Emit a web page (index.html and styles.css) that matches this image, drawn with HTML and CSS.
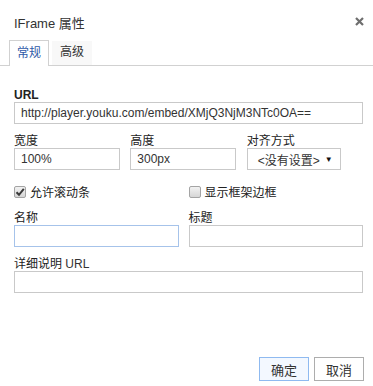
FILE: index.html
```html
<!DOCTYPE html>
<html lang="zh-CN">
    <head>
        <meta charset="utf-8">
        <title>IFrame 属性</title>
        <link rel="stylesheet" href="styles.css">
    </head>
    <body>
        <div class="dialog">
            <div class="dialog-title">
                <span>IFrame 属性</span>
                <svg class="close" width="9" height="9" viewBox="0 0 9 9"><path d="M1 1 L8 8 M8 1 L1 8" stroke="#6e6e6e" stroke-width="2.2"/></svg>
            </div>
            <div class="tabs">
                <div class="tab active">常规</div>
                <div class="tab">高级</div>
            </div>
            <div class="dialog-body">
                <div class="field">
                    <label class="bold">URL</label>
                    <div class="input wide">http://player.youku.com/embed/XMjQ3NjM3NTc0OA==</div>
                </div>
                <div class="row three">
                    <div class="field">
                        <label>宽度</label>
                        <div class="input small">100%</div>
                    </div>
                    <div class="field">
                        <label>高度</label>
                        <div class="input small">300px</div>
                    </div>
                    <div class="field">
                        <label>对齐方式</label>
                        <div class="select"><span>&lt;没有设置&gt;</span><span class="arrow">&#x25BC;</span></div>
                    </div>
                </div>
                <div class="row two checks">
                    <div class="check">
                        <span class="box"><svg width="10" height="10" viewBox="0 0 10 10"><path d="M1.5 5.2 L4 7.8 L8.8 1.8" fill="none" stroke="#3a3a3a" stroke-width="2"/></svg></span>
                        <span>允许滚动条</span>
                    </div>
                    <div class="check">
                        <span class="box"></span>
                        <span>显示框架边框</span>
                    </div>
                </div>
                <div class="row two">
                    <div class="field">
                        <label>名称</label>
                        <div class="input name focused"></div>
                    </div>
                    <div class="field">
                        <label>标题</label>
                        <div class="input wide"></div>
                    </div>
                </div>
                <div class="field">
                    <label>详细说明 <span class="en">URL</span></label>
                    <div class="input wide"></div>
                </div>
            </div>
            <div class="dialog-footer">
                <button class="btn ok" type="button">确定</button>
                <button class="btn" type="button">取消</button>
            </div>
        </div>
    </body>
</html>
```

FILE: styles.css
```css
body {
    margin: 0;
    background: #fff;
    font-family: Arial, "Liberation Sans", "Noto Sans CJK SC", sans-serif;
    font-size: 12px;
    color: #222;
}
.dialog {
    display: flex;
    flex-direction: column;
    height: 386px;
    box-sizing: border-box;
}
.dialog-title {
    display: flex;
    justify-content: space-between;
    align-items: center;
    height: 36px;
    padding: 4px 9px 0 14px;
    font-size: 13px;
    color: #333;
}
.close {
    display: block;
    margin-top: -2px;
}
.tabs {
    display: flex;
    gap: 3px;
    padding-left: 9px;
    height: 25px;
    border-bottom: 1px solid #d1d1d1;
    align-items: flex-end;
}
.tab {
    box-sizing: border-box;
    width: 40px;
    height: 24px;
    line-height: 23px;
    text-align: center;
    background: #f8f8f8;
    color: #333;
}
.tab.active {
    height: 26px;
    margin-bottom: -1px;
    line-height: 25px;
    background: #fff;
    border: 1px solid #d1d1d1;
    border-bottom: none;
    color: #2f5aa8;
}
.dialog-body {
    padding: 22px 10px 0 14px;
}
.field label {
    display: block;
    height: 14px;
    line-height: 14px;
    color: #222;
}
.bold {
    font-weight: bold;
}
.en {
    color: #333;
}
.input {
    box-sizing: border-box;
    height: 22px;
    line-height: 20px;
    padding: 0 6px;
    border: 1px solid #c9c9c9;
    color: #333;
    white-space: nowrap;
    overflow: hidden;
}
.input.wide {
    width: 100%;
}
.input.small {
    width: 106px;
}
.input.name {
    width: 165px;
}
.input.focused {
    border-color: #a6c3ea;
}
.row {
    display: grid;
    margin-top: 10px;
}
.row.three {
    grid-template-columns: repeat(3, 1fr);
}
.row.two {
    grid-template-columns: 1fr 1fr;
}
.row.checks {
    margin-top: 13px;
    height: 16px;
}
.checks + .row {
    margin-top: 12px;
}
.row + .field {
    margin-top: 10px;
}
.select {
    box-sizing: border-box;
    display: flex;
    align-items: center;
    width: 94px;
    height: 22px;
    padding: 0 7px 0 10px;
    border: 1px solid #c9c9c9;
    font-size: 12px;
    color: #333;
    justify-content: space-between;
}
.arrow {
    font-size: 8px;
    color: #111;
}
.check {
    display: flex;
    align-items: center;
    gap: 4px;
    color: #222;
}
.box {
    box-sizing: border-box;
    display: flex;
    align-items: center;
    justify-content: center;
    width: 12px;
    height: 12px;
    border: 1px solid #a4a4a4;
    border-radius: 2px;
    background: linear-gradient(#f2f2f2, #d6d6d6);
}
.dialog-footer {
    margin-top: auto;
    display: flex;
    justify-content: flex-end;
    gap: 5px;
    padding: 0 9px 5px 0;
}
.btn {
    box-sizing: border-box;
    width: 50px;
    height: 24px;
    padding: 0;
    font-family: inherit;
    font-size: 13px;
    color: #333;
    background: #fff;
    border: 1px solid #adadad;
}
.btn.ok {
    background: #f3f8ff;
    border-color: #8fbaf0;
}
```
